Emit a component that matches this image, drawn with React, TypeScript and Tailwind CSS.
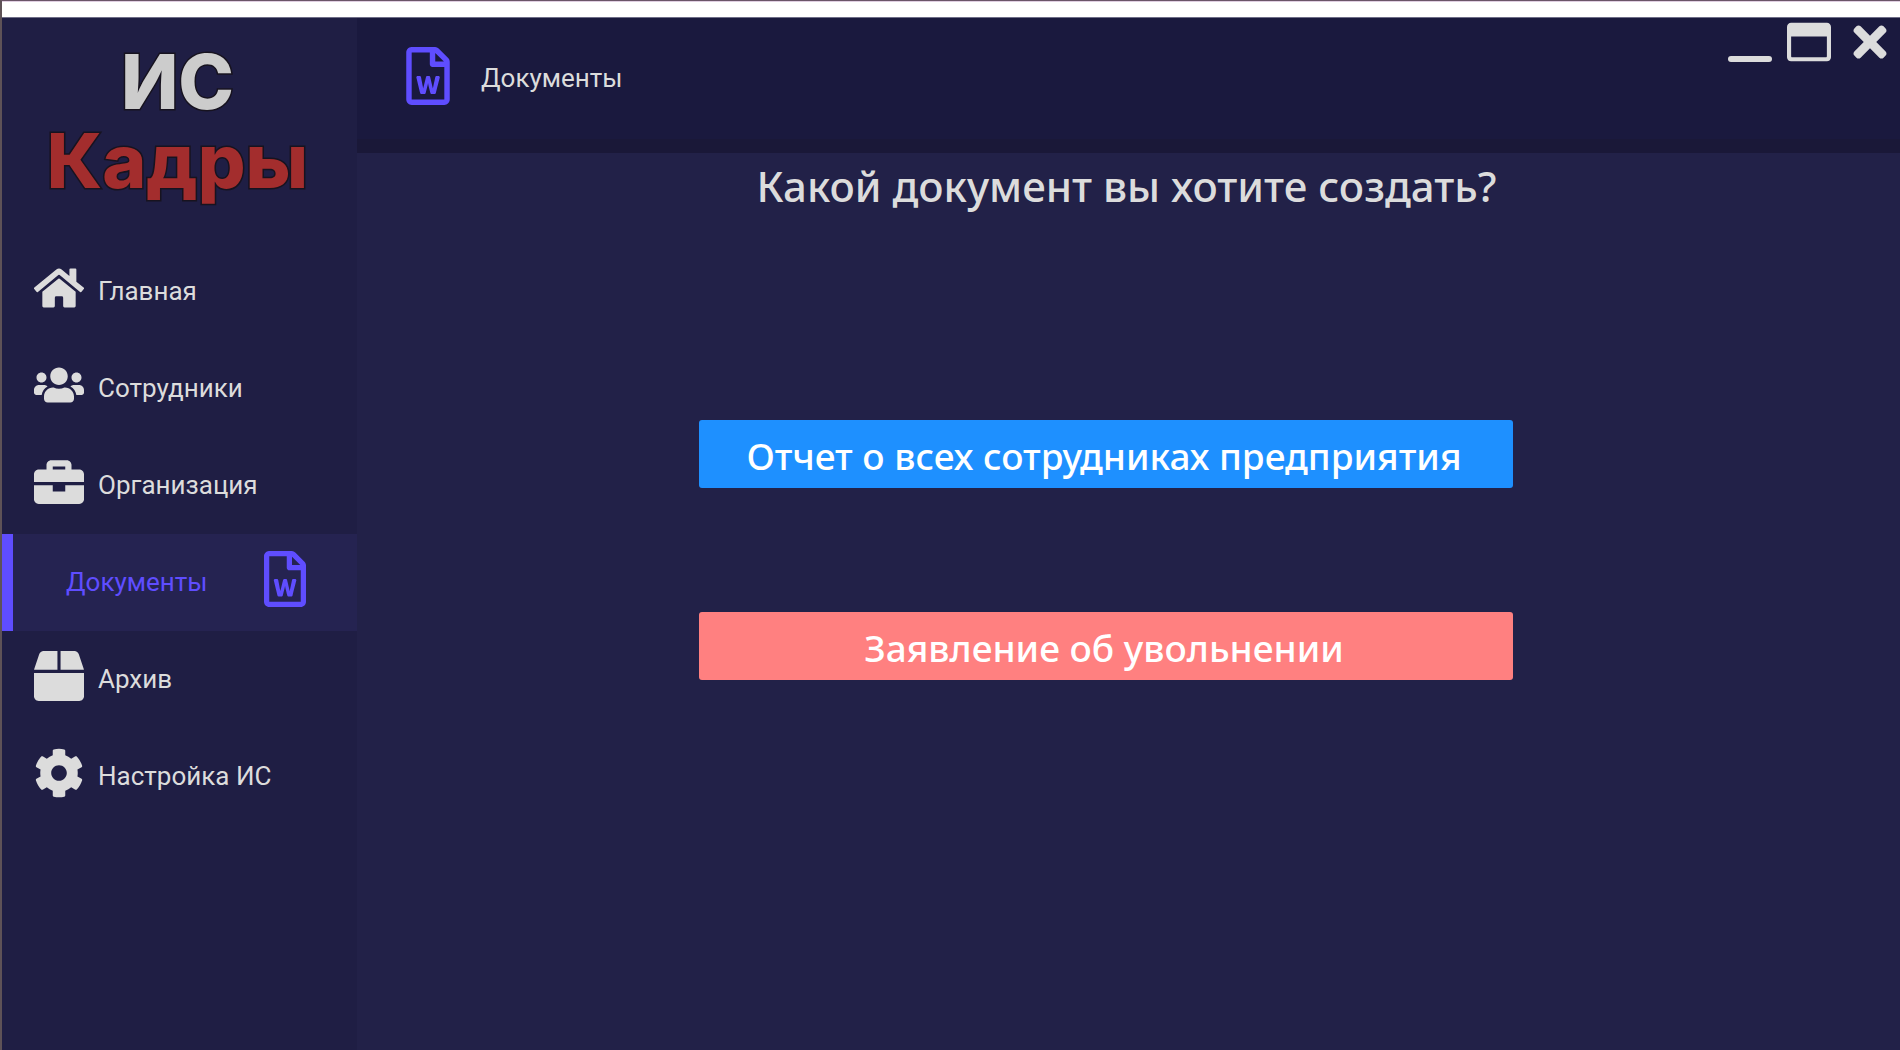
import React from "react";
import {
  FaBox,
  FaCog,
  FaHome,
  FaRegFileWord,
  FaRegWindowMaximize,
  FaTimes,
  FaUsers,
} from "react-icons/fa";

type IconProps = { className?: string };
type Item = { label: string; icon: React.ComponentType<IconProps>; active?: boolean };

function BriefcaseIcon({ className }: IconProps) {
  return (
    <svg viewBox="0 0 512 512" className={className} fill="currentColor" aria-hidden>
      <path
        fillRule="evenodd"
        d="M176 32h160c26 0 48 22 48 48v48h80c26 0 48 22 48 48v80H0v-80c0-26 22-48 48-48h80V80c0-26 22-48 48-48zm16 64v32h128V96H192z"
      />
      <path d="M0 288h192v64h128v-64h192v144c0 26-22 48-48 48H48c-26 0-48-22-48-48V288z" />
    </svg>
  );
}

function MinimizeIcon({ className }: IconProps) {
  return (
    <svg viewBox="0 0 44 44" className={className} fill="currentColor" aria-hidden>
      <rect x="0" y="36" width="44" height="6" rx="3" />
    </svg>
  );
}

const items: Item[] = [
  { label: "Главная", icon: FaHome },
  { label: "Сотрудники", icon: FaUsers },
  { label: "Организация", icon: BriefcaseIcon },
  { label: "Документы", icon: FaRegFileWord, active: true },
  { label: "Архив", icon: FaBox },
  { label: "Настройка ИС", icon: FaCog },
];

function MenuItem({ label, icon: Icon, active }: Item) {
  if (active) {
    return (
      <button
        type="button"
        aria-current="page"
        className="flex h-[97px] w-full items-center border-l-[11px] border-[#5f4dff] bg-[#252351] pl-[53px] pr-11 text-left text-[#5f4dff]"
      >
        <span className="flex-1">{label}</span>
        <Icon className="mb-2 size-14" />
      </button>
    );
  }
  return (
    <button type="button" className="flex h-[97px] w-full items-center gap-3.5 pl-8 text-left">
      <Icon className="mb-2 size-[50px]" />
      <span>{label}</span>
    </button>
  );
}

function Sidebar() {
  return (
    <aside className="w-[355px] shrink-0 bg-[#1f1e44]">
      <div className="flex h-[225px] flex-col items-center pt-6 pr-1 text-center font-['Inter',sans-serif] text-[75px] leading-[79px] font-extrabold [-webkit-text-stroke:3px_#17131f] [paint-order:stroke_fill]">
        <span className="text-[#cccccc]">ИС</span>
        <span className="text-[#a32d2d]">Кадры</span>
      </div>
      <nav aria-label="Меню">
        {items.map((item) => (
          <MenuItem key={item.label} {...item} />
        ))}
      </nav>
    </aside>
  );
}

function TitleBar() {
  return (
    <header className="flex h-[135px] items-start justify-between border-b-[14px] border-[#1a1838] bg-[#1a193e]">
      <div className="flex items-center gap-6 pt-[29px] pl-[42px]">
        <FaRegFileWord aria-hidden className="size-[58px] text-[#5f4dff]" />
        <span className="pt-1">Документы</span>
      </div>
      <div className="flex items-center gap-[15px] pr-1.5">
        <button type="button" aria-label="Свернуть">
          <MinimizeIcon className="size-11" />
        </button>
        <button type="button" aria-label="Развернуть">
          <FaRegWindowMaximize className="size-11" />
        </button>
        <button type="button" aria-label="Закрыть">
          <FaTimes className="size-12" />
        </button>
      </div>
    </header>
  );
}

export default function App() {
  return (
    <div className="flex min-h-screen flex-col border-t border-l-2 border-t-[#6b5568] border-l-[#5e5257] bg-[#222148] font-['Roboto',sans-serif] text-[26px] text-[#dcdcdc]">
      <div className="h-4 border-t border-t-[#e0cfe2] bg-white" />
      <div className="flex flex-1 border-t border-t-[#6f6e88]">
        <Sidebar />
        <div className="flex-1">
          <TitleBar />
          <main className="font-['Noto_Sans',sans-serif] font-medium">
            <h1 className="pt-1 pr-1 text-center text-[42px] leading-[58px]">
              Какой документ вы хотите создать?
            </h1>
            <div className="grid grid-cols-[342fr_814fr_387fr] gap-y-[124px] pt-[205px] text-[37px] leading-[64px] text-white">
              <button type="button" className="col-start-2 h-[68px] rounded-[3px] bg-[#1e90ff] pt-1 pr-1">
                Отчет о всех сотрудниках предприятия
              </button>
              <button type="button" className="col-start-2 h-[68px] rounded-[3px] bg-[#ff8080] pt-1 pr-1">
                Заявление об увольнении
              </button>
            </div>
          </main>
        </div>
      </div>
    </div>
  );
}
